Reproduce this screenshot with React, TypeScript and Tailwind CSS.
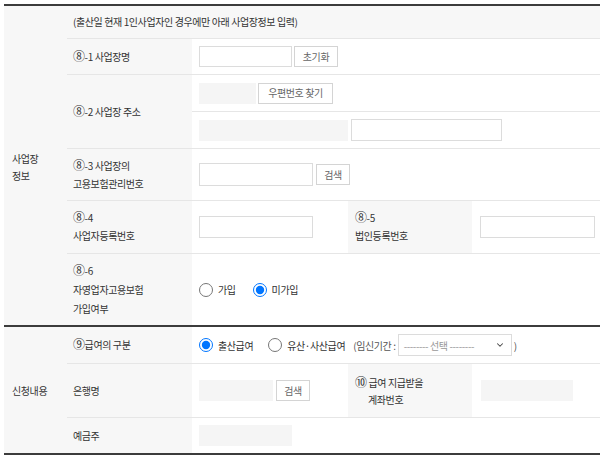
import { ChevronDown } from 'lucide-react';

const font = { fontFamily: '"Noto Sans CJK KR", "Noto Sans", sans-serif' };

function Btn({ children, w }: { children: React.ReactNode; w: string }) {
  return (
    <button
      className={`h-[21px] ${w} border border-[#d4d4d4] bg-white text-[10px] text-[#666] flex items-center justify-center leading-none`}
    >
      {children}
    </button>
  );
}

function Disabled({ w }: { w: string }) {
  return <div className={`h-[21px] ${w} bg-[#f5f5f5]`} />;
}

function Field({ w, h = 'h-[22px]' }: { w: string; h?: string }) {
  return <input className={`${h} ${w} border border-[#dcdcdc] bg-white outline-none`} />;
}

function Radio({ label, checked, name }: { label: string; checked?: boolean; name: string }) {
  return (
    <label className="flex items-center gap-[5px]">
      <input type="radio" name={name} defaultChecked={checked} className="m-0 w-[14px] h-[14px]" />
      <span>{label}</span>
    </label>
  );
}

// circled numbers render small in the CJK font, bump them up a bit
function Num({ c }: { c: string }) {
  return <span className="text-[12px] leading-none">{c}</span>;
}

export default function App() {
  return (
    <div className="pl-[4px] pt-[4px] bg-white w-[600px] h-[458px] overflow-hidden text-[10px] tracking-[-0.4px] text-[#333]" style={font}>
      <div className="w-[596px]">
        {/* 사업장 정보 */}
        <div className="grid grid-cols-[63px_1fr] border-t-2 border-b-2 border-[#3c3c3c]">
          <div className="bg-[#f7f7f7] flex flex-col justify-center pl-[8px] leading-[17px] pt-[2px]">
            <span>사업장</span>
            <span>정보</span>
          </div>
          <div className="flex flex-col">
            <div className="h-[33px] bg-[#f7f7f7] border-b border-[#e6e6e6] flex items-center pl-[6px] pb-[2px]">
              (출산일 현재 1인사업자인 경우에만 아래 사업장정보 입력)
            </div>
            <div className="h-[36px] grid grid-cols-[125px_1fr] border-b border-[#e6e6e6]">
              <div className="bg-[#f7f7f7] flex items-center pl-[6px]"><span><Num c="⑧" />-1 사업장명</span></div>
              <div className="flex items-center pl-[7px] gap-[2px]">
                <Field w="w-[93px]" h="h-[21px]" />
                <Btn w="w-[44px]">초기화</Btn>
              </div>
            </div>
            <div className="h-[74px] grid grid-cols-[125px_1fr] border-b border-[#e6e6e6]">
              <div className="bg-[#f7f7f7] flex items-center pl-[6px]"><span><Num c="⑧" />-2 사업장 주소</span></div>
              <div className="flex flex-col">
                <div className="h-[37px] border-b border-[#e6e6e6] flex items-center pl-[7px] gap-[2px]">
                  <Disabled w="w-[57px]" />
                  <Btn w="w-[75px]">우편번호 찾기</Btn>
                </div>
                <div className="h-[36px] flex items-center pl-[7px] gap-[3px]">
                  <Disabled w="w-[149px]" />
                  <Field w="w-[151px]" />
                </div>
              </div>
            </div>
            <div className="h-[52px] grid grid-cols-[125px_1fr] border-b border-[#e6e6e6]">
              <div className="bg-[#f7f7f7] flex flex-col justify-center pl-[6px] leading-[18px]">
                <span><Num c="⑧" />-3 사업장의</span>
                <span>고용보험관리번호</span>
              </div>
              <div className="flex items-center pl-[7px] gap-[3px]">
                <Field w="w-[114px]" h="h-[23px]" />
                <Btn w="w-[34px]">검색</Btn>
              </div>
            </div>
            <div className="h-[53px] grid grid-cols-[125px_156px_124px_1fr] border-b border-[#e6e6e6]">
              <div className="bg-[#f7f7f7] flex flex-col justify-center pl-[6px] leading-[18px]">
                <span><Num c="⑧" />-4</span>
                <span>사업자등록번호</span>
              </div>
              <div className="flex items-center pl-[7px]">
                <Field w="w-[114px]" />
              </div>
              <div className="bg-[#f7f7f7] flex flex-col justify-center pl-[7px] leading-[18px]">
                <span><Num c="⑧" />-5</span>
                <span>법인등록번호</span>
              </div>
              <div className="flex items-center pl-[8px]">
                <Field w="w-[115px]" />
              </div>
            </div>
            <div className="h-[71px] grid grid-cols-[125px_1fr]">
              <div className="bg-[#f7f7f7] flex flex-col justify-center pl-[6px] leading-[19px]">
                <span><Num c="⑧" />-6</span>
                <span>자영업자고용보험</span>
                <span>가입여부</span>
              </div>
              <div className="flex items-center pl-[7px] gap-[17px]">
                <Radio name="self" label="가입" />
                <Radio name="self" label="미가입" checked />
              </div>
            </div>
          </div>
        </div>

        {/* 신청내용 */}
        <div className="grid grid-cols-[63px_1fr] border-b-2 border-[#3c3c3c]">
          <div className="bg-[#f7f7f7] flex items-center pl-[8px]">신청내용</div>
          <div className="flex flex-col">
            <div className="h-[37px] grid grid-cols-[125px_1fr] border-b border-[#e6e6e6]">
              <div className="bg-[#f7f7f7] flex items-center pl-[6px] pb-[2px]"><span><Num c="⑨" />급여의 구분</span></div>
              <div className="flex items-center pl-[7px]">
                <Radio name="kind" label="출산급여" checked />
                <div className="ml-[15px]">
                  <Radio name="kind" label="유산·사산급여" />
                </div>
                <span className="ml-[8px] text-[#555]">(임신기간 :</span>
                <div className="ml-[2px] h-[22px] w-[114px] border border-[#dcdcdc] bg-white flex items-center justify-between pl-[5px] pr-[6px] text-[#999]">
                  <span>-------- 선택 --------</span>
                  <ChevronDown className="w-[10px] h-[10px] text-[#444]" strokeWidth={2.5} />
                </div>
                <span className="ml-[2px] text-[#555]">)</span>
              </div>
            </div>
            <div className="h-[54px] grid grid-cols-[125px_156px_124px_1fr] border-b border-[#e6e6e6]">
              <div className="bg-[#f7f7f7] flex items-center pl-[6px]">은행명</div>
              <div className="flex items-center pl-[7px] gap-[3px]">
                <Disabled w="w-[74px]" />
                <Btn w="w-[34px]">검색</Btn>
              </div>
              <div className="bg-[#f7f7f7] flex flex-col justify-center pl-[7px] leading-[17px]">
                <span><Num c="⑩" /> 급여 지급받을</span>
                <span className="pl-[13px]">계좌번호</span>
              </div>
              <div className="flex items-center pl-[9px]">
                <Disabled w="w-[92px]" />
              </div>
            </div>
            <div className="h-[35px] grid grid-cols-[125px_1fr]">
              <div className="bg-[#f7f7f7] flex items-center pl-[6px]">예금주</div>
              <div className="flex items-center pl-[7px]">
                <Disabled w="w-[93px]" />
              </div>
            </div>
          </div>
        </div>
      </div>
    </div>
  );
}
